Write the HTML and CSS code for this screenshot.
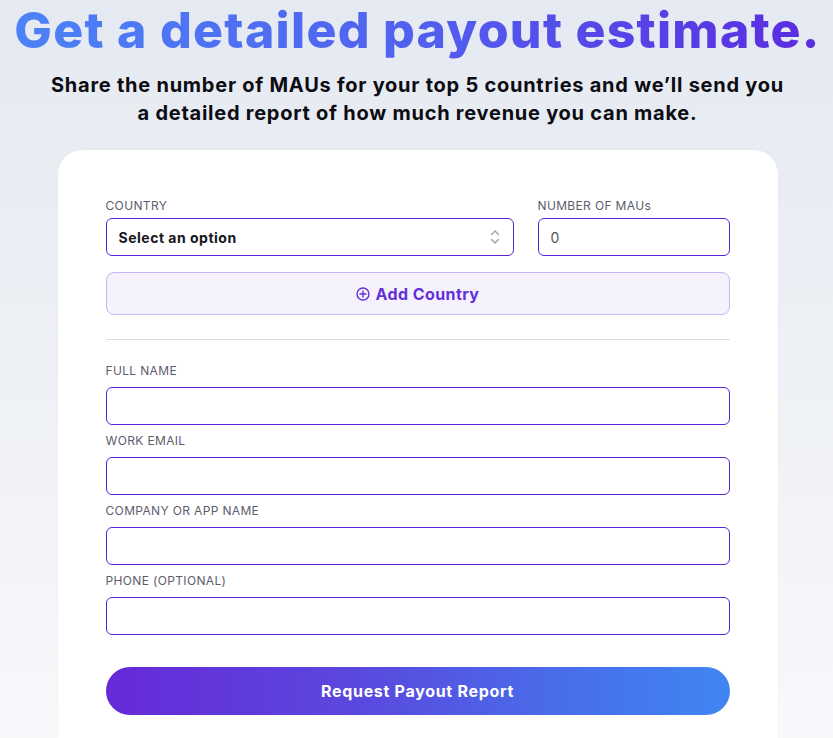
FILE: index.html
```html
<!DOCTYPE html>
<html lang="en">
<head>
    <meta charset="UTF-8">
    <meta name="viewport" content="width=device-width, initial-scale=1.0">
    <title>Payout Estimate</title>
    <link rel="stylesheet" href="styles.css">
</head>
<body>
    <main class="page">
        <h1 class="title">Get a detailed payout estimate.</h1>
        <p class="lead">Share the number of MAUs for your top 5 countries and we’ll send you<br>a detailed report of how much revenue you can make.</p>

        <form class="card">
            <div class="country-row">
                <div class="field field-top">
                    <label for="country">COUNTRY</label>
                    <div class="select-wrap">
                        <select id="country">
                            <option>Select an option</option>
                        </select>
                        <svg class="select-arrows" width="10" height="16" viewBox="0 0 10 16" fill="none" stroke="#9a9aa6" stroke-width="1.3" stroke-linecap="round" stroke-linejoin="round">
                            <path d="M1.5 5.5 5 2 8.5 5.5"/>
                            <path d="M1.5 10.5 5 14 8.5 10.5"/>
                        </svg>
                    </div>
                </div>
                <div class="field field-top">
                    <label for="maus">NUMBER OF MAUs</label>
                    <input type="text" id="maus" value="0">
                </div>
            </div>

            <button type="button" class="add-btn">
                <svg width="14" height="14" viewBox="0 0 14 14" fill="none" stroke="currentColor" stroke-width="1.4" stroke-linecap="round">
                    <circle cx="7" cy="7" r="6"/>
                    <path d="M7 4v6M4 7h6"/>
                </svg>
                Add Country
            </button>

            <hr class="divider">

            <div class="field">
                <label for="fullName">FULL NAME</label>
                <input type="text" id="fullName">
            </div>
            <div class="field">
                <label for="workEmail">WORK EMAIL</label>
                <input type="email" id="workEmail">
            </div>
            <div class="field">
                <label for="company">COMPANY OR APP NAME</label>
                <input type="text" id="company">
            </div>
            <div class="field">
                <label for="phone">PHONE (OPTIONAL)</label>
                <input type="tel" id="phone">
            </div>

            <button type="button" class="submit-btn">Request Payout Report</button>
        </form>
    </main>
</body>
</html>
```

FILE: styles.css
```css
:root {
    --purple: #5b22dc;
    --purple-text: #6230d8;
    --label: #5e5c6c;
    --radius: 6px;
}

* {
    box-sizing: border-box;
    margin: 0;
    padding: 0;
}

body {
    font-family: Inter, "Noto Sans", sans-serif;
    background: linear-gradient(180deg, #e5e9f1 0%, #f0f2f6 60%, #f8f9fb 100%);
    min-height: 100vh;
    color: #111;
}

.page {
    display: flex;
    flex-direction: column;
    align-items: center;
    padding-left: 2px;
}

.title {
    font-size: 50px;
    font-weight: 800;
    line-height: 60px;
    letter-spacing: 1.25px;
    white-space: nowrap;
    background: linear-gradient(90deg, #4c82f7 0%, #5160ee 50%, #5b2be0 100%);
    -webkit-background-clip: text;
    background-clip: text;
    color: transparent;
}

.lead {
    margin-top: 11px;
    font-size: 20px;
    font-weight: 700;
    line-height: 28px;
    letter-spacing: 0.75px;
    text-align: center;
    color: #0c0c12;
}

.card {
    margin-top: 23px;
    width: 720px;
    background: #fff;
    border-radius: 24px 24px 0 0;
    padding: 48px 48px 40px;
    box-shadow: 0 0 2px rgba(20, 30, 60, 0.06);
    display: flex;
    flex-direction: column;
    gap: 8px;
}

.country-row {
    display: grid;
    grid-template-columns: 1fr 192px;
    gap: 24px;
}

.field {
    display: flex;
    flex-direction: column;
}

.field label {
    font-size: 12px;
    line-height: 16px;
    color: var(--label);
    margin-bottom: 8px;
    letter-spacing: 0.35px;
}

.field-top label {
    margin-bottom: 4px;
}

input,
select {
    height: 38px;
    width: 100%;
    border: 1px solid var(--purple);
    border-radius: var(--radius);
    background: #fff;
    font-family: inherit;
    font-size: 14px;
    padding: 0 12px;
    outline: none;
}

input {
    color: #555;
}

.select-wrap {
    position: relative;
}

select {
    appearance: none;
    -webkit-appearance: none;
    font-weight: 700;
    letter-spacing: 0.5px;
    color: #16161c;
}

.select-arrows {
    position: absolute;
    right: 14px;
    top: 11px;
    pointer-events: none;
}

.add-btn {
    margin-top: 8px;
    height: 43px;
    border: 1px solid #c9b5f6;
    border-radius: 8px;
    background: #f5f2fe;
    color: var(--purple-text);
    font-family: inherit;
    font-size: 16px;
    font-weight: 700;
    letter-spacing: 0.4px;
    display: flex;
    align-items: center;
    justify-content: center;
    gap: 6px;
    cursor: pointer;
}

.divider {
    border: none;
    border-top: 1px solid #dcdce0;
    margin: 16px 0 15px;
}

.submit-btn {
    margin-top: 24px;
    height: 48px;
    border: none;
    border-radius: 24px;
    background: linear-gradient(90deg, #6629d8 0%, #5a48de 40%, #4a6ae9 70%, #3f86f2 100%);
    color: #fff;
    font-family: inherit;
    font-size: 16px;
    font-weight: 700;
    letter-spacing: 0.7px;
    cursor: pointer;
}
```
